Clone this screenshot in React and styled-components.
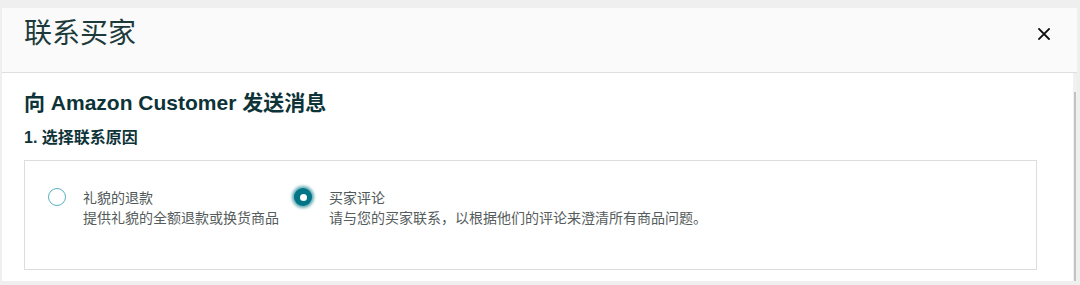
import React from "react";
import styled, { createGlobalStyle } from "styled-components";

const GlobalStyle = createGlobalStyle`
  html, body {
    margin: 0;
    padding: 0;
    background: #efefef;
  }
  body {
    font-family: "Liberation Sans", Arial, "Noto Sans CJK SC", sans-serif;
    height: 285px;
    overflow: hidden;
  }
  * { box-sizing: border-box; }
`;

const Modal = styled.div`
  margin: 8px 3px 0 2px;
  display: flex;
  flex-direction: column;
`;

const Header = styled.div`
  height: 65px;
  background: #fafafa;
  border-bottom: 1px solid #dcdfdf;
  display: flex;
  align-items: flex-start;
  justify-content: space-between;
  padding: 9px 26px 0 22px;
`;

const ModalTitle = styled.h1`
  margin: 0;
  font-family: "Noto Sans CJK SC", sans-serif;
  font-weight: 400;
  font-size: 28px;
  line-height: 28px;
  color: #1d3a3b;
`;

const CloseButton = styled.button`
  margin-top: 10px;
  width: 14px;
  height: 14px;
  padding: 0;
  border: 0;
  background: transparent;
  display: flex;
  align-items: center;
  justify-content: center;
  cursor: pointer;
`;

const BodyRow = styled.div`
  display: flex;
  height: 208px;
  background: #fff;
`;

const Content = styled.div`
  flex: 1;
  padding: 18px 36px 11px 22px;
  display: flex;
  flex-direction: column;
`;

const ScrollTrack = styled.div`
  width: 4px;
  background: #f1f1f1;
  padding: 19px 1px 0 1px;
  display: flex;
`;

const ScrollThumb = styled.div`
  flex: 1;
  background: #c3c3c3;
`;

const Heading = styled.h2`
  margin: 0;
  font-size: 21px;
  line-height: 24px;
  font-weight: 700;
  color: #0d3338;
`;

const SubHeading = styled.h3`
  margin: 13px 0 0 0;
  font-size: 16px;
  line-height: 20px;
  font-weight: 700;
  color: #0d3338;
`;

const OptionBox = styled.div`
  margin: 12px 0 0 0;
  border: 1px solid #dddddd;
  padding: 26px 23px 42px 23px;
  display: flex;
  gap: 15px;
`;

const Option = styled.label`
  display: flex;
  align-items: flex-start;
  gap: 17px;
  cursor: pointer;
`;

const Radio = styled.span`
  flex: none;
  width: 18px;
  height: 18px;
  margin-top: 1px;
  border-radius: 50%;
  display: flex;
  align-items: center;
  justify-content: center;
  border: ${(p) => (p.$checked ? "none" : "1.5px solid #5aafbf")};
  background: ${(p) => (p.$checked ? "#007586" : "#fff")};
  box-shadow: ${(p) =>
    p.$checked ? "0 0 3px 2px rgba(0, 117, 134, 0.6)" : "none"};

  &::after {
    content: "";
    display: ${(p) => (p.$checked ? "block" : "none")};
    width: 7px;
    height: 7px;
    border-radius: 50%;
    background: #fff;
  }
`;

const OptionText = styled.div`
  display: flex;
  flex-direction: column;
  font-family: "Noto Sans CJK SC", sans-serif;
  font-size: 14px;
  line-height: 20px;
`;

const OptionTitle = styled.span`
  color: #4f5858;
`;

const OptionDesc = styled.span`
  color: #555c5c;
`;

const options = [
  {
    title: "礼貌的退款",
    desc: "提供礼貌的全额退款或换货商品",
    checked: false,
  },
  {
    title: "买家评论",
    desc: "请与您的买家联系，以根据他们的评论来澄清所有商品问题。",
    checked: true,
  },
];

export default function App() {
  return (
    <>
      <GlobalStyle />
      <Modal>
        <Header>
          <ModalTitle>联系买家</ModalTitle>
          <CloseButton aria-label="关闭">
            <svg width="12" height="12" viewBox="0 0 12 12">
              <path
                d="M1 1 L11 11 M11 1 L1 11"
                stroke="#111"
                strokeWidth="1.8"
                strokeLinecap="square"
              />
            </svg>
          </CloseButton>
        </Header>
        <BodyRow>
          <Content>
            <Heading>向 Amazon Customer 发送消息</Heading>
            <SubHeading>1. 选择联系原因</SubHeading>
            <OptionBox>
              {options.map((o) => (
                <Option key={o.title}>
                  <Radio $checked={o.checked} />
                  <OptionText>
                    <OptionTitle>{o.title}</OptionTitle>
                    <OptionDesc>{o.desc}</OptionDesc>
                  </OptionText>
                </Option>
              ))}
            </OptionBox>
          </Content>
          <ScrollTrack>
            <ScrollThumb />
          </ScrollTrack>
        </BodyRow>
      </Modal>
    </>
  );
}
